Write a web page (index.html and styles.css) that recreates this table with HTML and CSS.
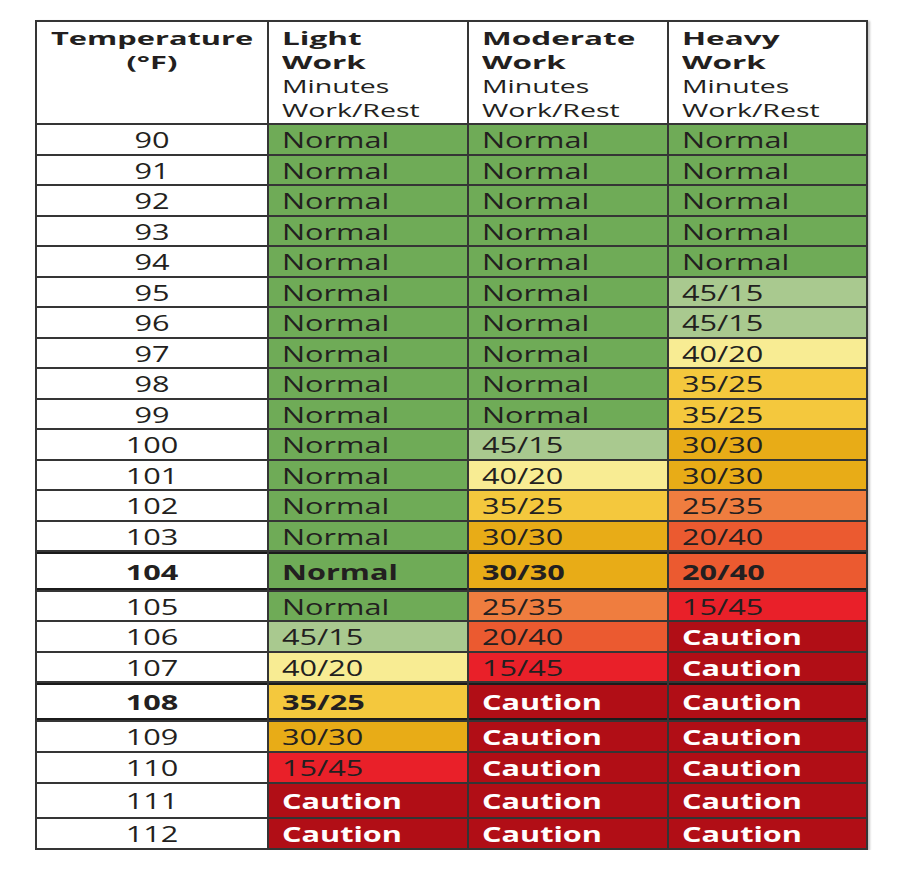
FILE: index.html
```html
<!DOCTYPE html>
<html lang="en">
<head>
<meta charset="utf-8">
<title>Work/Rest Schedule</title>
<link rel="stylesheet" href="styles.css">
</head>
<body>
<div class="tbl">
  <div class="c hd tempc"><span class="hb">Temperature</span><span class="hb">(°F)</span></div>
  <div class="c hd"><span class="hb">Light</span><span class="hb">Work</span><span class="hr">Minutes</span><span class="hr">Work/Rest</span></div>
  <div class="c hd"><span class="hb">Moderate</span><span class="hb">Work</span><span class="hr">Minutes</span><span class="hr">Work/Rest</span></div>
  <div class="c hd"><span class="hb">Heavy</span><span class="hb">Work</span><span class="hr">Minutes</span><span class="hr">Work/Rest</span></div>

  <div class="c tc"><span class="t">90</span></div><div class="c g"><span class="t">Normal</span></div><div class="c g"><span class="t">Normal</span></div><div class="c g"><span class="t">Normal</span></div>
  <div class="c tc"><span class="t">91</span></div><div class="c g"><span class="t">Normal</span></div><div class="c g"><span class="t">Normal</span></div><div class="c g"><span class="t">Normal</span></div>
  <div class="c tc"><span class="t">92</span></div><div class="c g"><span class="t">Normal</span></div><div class="c g"><span class="t">Normal</span></div><div class="c g"><span class="t">Normal</span></div>
  <div class="c tc"><span class="t">93</span></div><div class="c g"><span class="t">Normal</span></div><div class="c g"><span class="t">Normal</span></div><div class="c g"><span class="t">Normal</span></div>
  <div class="c tc"><span class="t">94</span></div><div class="c g"><span class="t">Normal</span></div><div class="c g"><span class="t">Normal</span></div><div class="c g"><span class="t">Normal</span></div>
  <div class="c tc"><span class="t">95</span></div><div class="c g"><span class="t">Normal</span></div><div class="c g"><span class="t">Normal</span></div><div class="c lg"><span class="t">45/15</span></div>
  <div class="c tc"><span class="t">96</span></div><div class="c g"><span class="t">Normal</span></div><div class="c g"><span class="t">Normal</span></div><div class="c lg"><span class="t">45/15</span></div>
  <div class="c tc"><span class="t">97</span></div><div class="c g"><span class="t">Normal</span></div><div class="c g"><span class="t">Normal</span></div><div class="c py"><span class="t">40/20</span></div>
  <div class="c tc"><span class="t">98</span></div><div class="c g"><span class="t">Normal</span></div><div class="c g"><span class="t">Normal</span></div><div class="c y"><span class="t">35/25</span></div>
  <div class="c tc"><span class="t">99</span></div><div class="c g"><span class="t">Normal</span></div><div class="c g"><span class="t">Normal</span></div><div class="c y"><span class="t">35/25</span></div>
  <div class="c tc"><span class="t">100</span></div><div class="c g"><span class="t">Normal</span></div><div class="c lg"><span class="t">45/15</span></div><div class="c gd"><span class="t">30/30</span></div>
  <div class="c tc"><span class="t">101</span></div><div class="c g"><span class="t">Normal</span></div><div class="c py"><span class="t">40/20</span></div><div class="c gd"><span class="t">30/30</span></div>
  <div class="c tc"><span class="t">102</span></div><div class="c g"><span class="t">Normal</span></div><div class="c y"><span class="t">35/25</span></div><div class="c o"><span class="t">25/35</span></div>
  <div class="c tc"><span class="t">103</span></div><div class="c g"><span class="t">Normal</span></div><div class="c gd"><span class="t">30/30</span></div><div class="c ro"><span class="t">20/40</span></div>

  <div class="c tc hl"><span class="t b">104</span></div><div class="c g hl"><span class="t b">Normal</span></div><div class="c gd hl"><span class="t b">30/30</span></div><div class="c ro hl"><span class="t b">20/40</span></div>

  <div class="c tc"><span class="t">105</span></div><div class="c g"><span class="t">Normal</span></div><div class="c o"><span class="t">25/35</span></div><div class="c r"><span class="t">15/45</span></div>
  <div class="c tc"><span class="t">106</span></div><div class="c lg"><span class="t">45/15</span></div><div class="c ro"><span class="t">20/40</span></div><div class="c dr"><span class="t">Caution</span></div>
  <div class="c tc"><span class="t">107</span></div><div class="c py"><span class="t">40/20</span></div><div class="c r"><span class="t">15/45</span></div><div class="c dr"><span class="t">Caution</span></div>

  <div class="c tc hl"><span class="t b">108</span></div><div class="c y hl"><span class="t b">35/25</span></div><div class="c dr hl"><span class="t">Caution</span></div><div class="c dr hl"><span class="t">Caution</span></div>

  <div class="c tc"><span class="t">109</span></div><div class="c gd"><span class="t">30/30</span></div><div class="c dr"><span class="t">Caution</span></div><div class="c dr"><span class="t">Caution</span></div>
  <div class="c tc"><span class="t">110</span></div><div class="c r"><span class="t">15/45</span></div><div class="c dr"><span class="t">Caution</span></div><div class="c dr"><span class="t">Caution</span></div>
  <div class="c tc"><span class="t">111</span></div><div class="c dr"><span class="t">Caution</span></div><div class="c dr"><span class="t">Caution</span></div><div class="c dr"><span class="t">Caution</span></div>
  <div class="c tc"><span class="t">112</span></div><div class="c dr"><span class="t">Caution</span></div><div class="c dr"><span class="t">Caution</span></div><div class="c dr"><span class="t">Caution</span></div>
</div>
</body>
</html>
```

FILE: styles.css
```css
html, body {
  margin: 0;
  padding: 0;
  background: #ffffff;
}

body {
  font-family: "Open Sans", "DejaVu Sans", sans-serif;
  color: #231f20;
}

.tbl {
  display: grid;
  grid-template-columns: 230px 198px 198px 197px;
  grid-template-rows: 101px repeat(7, 29px 28px) 38px 28px 29px 28px 37px 29px 29px 33px 29px;
  gap: 2px;
  padding: 2px;
  background: #353535;
  width: max-content;
  margin: 20px 0 0 35px;
  box-shadow: 2px 1px 2px rgba(0, 0, 0, 0.22);
}

.c {
  box-sizing: border-box;
  display: flex;
  align-items: center;
  padding-left: 13px;
  background: #ffffff;
  overflow: visible;
  white-space: nowrap;
}

.tc {
  justify-content: center;
  padding-left: 0;
}

.hl {
  border-top: 2px solid #1b1b1b;
  border-bottom: 2px solid #1b1b1b;
}

.t {
  display: inline-block;
  font-size: 21px;
  line-height: 24px;
  padding-top: 1px;
  transform: scaleX(1.46);
  transform-origin: left center;
}

.tc .t {
  transform-origin: center center;
}

.b {
  font-weight: 700;
}

.hd {
  flex-direction: column;
  align-items: flex-start;
  justify-content: flex-start;
  padding-top: 4px;
}

.hd.tempc {
  align-items: center;
  padding-left: 0;
}

.hb, .hr {
  display: block;
  font-size: 18px;
  line-height: 24px;
  transform-origin: left center;
}

.hb {
  font-weight: 700;
  transform: scaleX(1.75);
}

.hr {
  font-weight: 400;
  transform: scaleX(1.58);
}

.tempc .hb {
  transform: scaleX(1.71);
  transform-origin: center center;
}

.g { background: #6fab57; }
.lg { background: #a9c98f; }
.py { background: #f8ec93; }
.y { background: #f4c83d; }
.gd { background: #e8ac17; }
.o { background: #ef7d3f; }
.ro { background: #eb5a30; }
.r { background: #e92029; }
.dr { background: #b10e16; }

.dr .t {
  color: #ffffff;
  font-weight: 700;
}
```
